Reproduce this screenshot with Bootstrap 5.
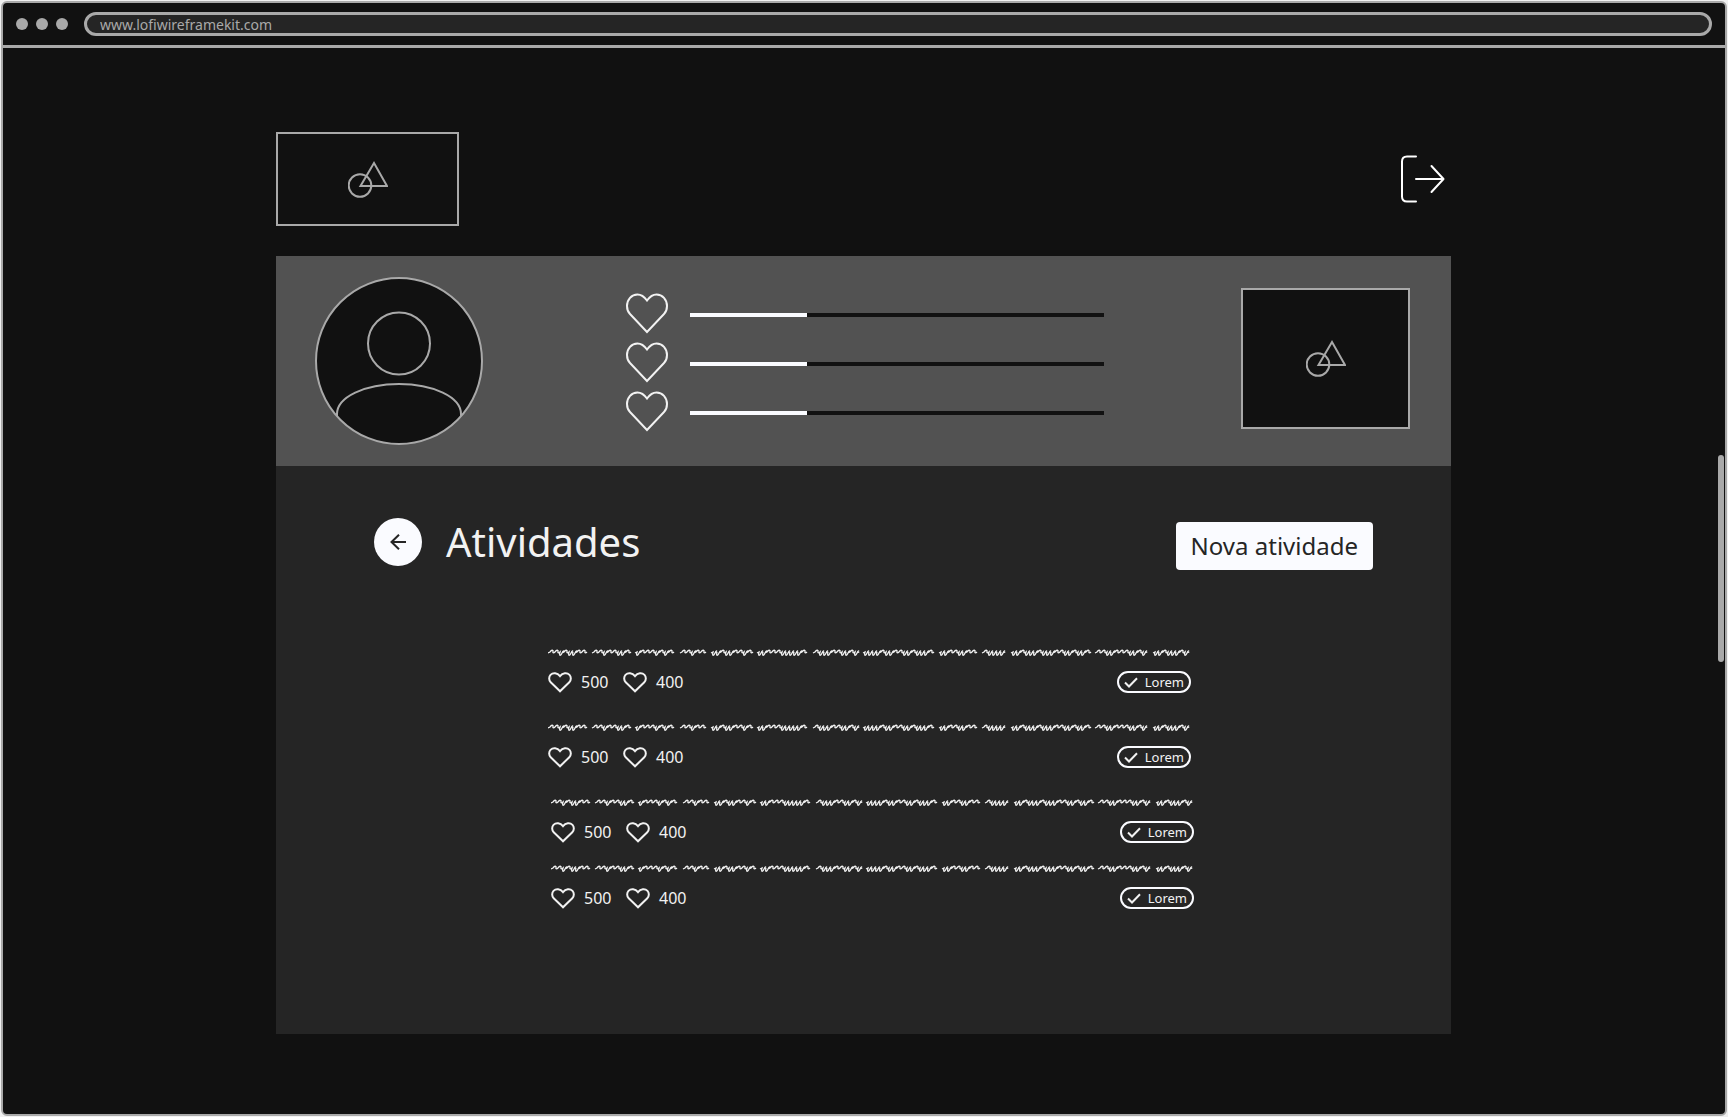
<!DOCTYPE html>
<html lang="pt">
<head>
<meta charset="utf-8">
<meta name="viewport" content="width=device-width, initial-scale=1">
<title>Atividades</title>
<link href="https://cdn.jsdelivr.net/npm/bootstrap@5.3.0/dist/css/bootstrap.min.css" rel="stylesheet">
<style>
  :root { --ink: #111; --panel: #252525; --band: #525252; --line: #a9a9a9; --paper: #fafbff; --text: #f2f2f2; }
  body { background: #f0f0f0; font-family: "Noto Sans", sans-serif; color: var(--text); padding: 1px; }
  svg { display: block; flex: none; fill: none; stroke: currentColor; stroke-width: 2; }
  .window { min-height: calc(100vh - 2px); background: var(--ink); border: 2px solid var(--line); border-radius: 6px; }
  .titlebar { height: 45px; padding: 0 13px; border-bottom: 3px solid var(--line); }
  .dot { width: 12px; height: 12px; background: var(--line); }
  .address { height: 24px; padding: 0 13px; border: 3px solid var(--line); background: var(--panel); color: var(--line); font-size: 14px; line-height: 18px; outline: 0; }
  .sheet { max-width: 1176px; padding: 84px 1px 79px 0; }
  .topline { padding-right: 6px; margin-bottom: 30px; }
  .picture { border: 2px solid var(--line); background: var(--ink); color: var(--line); }
  .logo-box { width: 183px; height: 94px; }
  .photo-box { width: 169px; height: 141px; }
  .band { background: var(--band); padding: 21px 41px 21px 39px; }
  .avatar { color: var(--line); margin-right: 143px; }
  .stats { padding-top: 16px; max-width: 478px; gap: 8px; }
  .stat { gap: 22px; }
  .meter { height: 4px; margin-top: 2px; background: var(--ink); border-radius: 0; }
  .meter .progress-bar { background: var(--paper); }
  .photo-col { padding-top: 11px; }
  .panel { background: var(--panel); min-height: 568px; padding: 52px 78px 0 98px; }
  .back { width: 48px; height: 48px; background: var(--paper); color: var(--panel); }
  .title { font-size: 40px; line-height: 48px; font-weight: 400; }
  .new-btn { height: 48px; padding: 0 15px; background: var(--paper); color: var(--panel); border: 0; border-radius: 4px; font-size: 24px; line-height: 48px; margin-top: 4px; }
  .tasks { max-width: 643px; margin: 79px 0 0 174px; gap: 31px; }
  .tasks-late { margin: 31px 0 0 177px; gap: 22px; }
  .task-line { height: 9px; max-width: 100%; stroke-width: 1.3; }
  .task-foot { padding-top: 13px; font-size: 16px; line-height: 22px; }
  .points { min-width: 75px; gap: 9px; }
  .tag { height: 22px; padding: 0 5px; gap: 7px; border: 2px solid var(--paper); background: none; color: var(--text); font-size: 13px; line-height: 18px; }
  .thumb { right: 1px; top: 452px; width: 6px; height: 207px; background: var(--line); }
</style>
</head>
<body>
<svg width="0" height="0" class="position-absolute" aria-hidden="true">
  <symbol id="shapes" viewBox="0 0 40 37"><circle cx="12" cy="24.5" r="11.3"/><path d="M26 2 12.500 25H39z"/></symbol>
  <symbol id="heart" viewBox="0 0 42 40"><path d="M21 38.500 4 20.500C1.500 18 1 15 1 12.500 1 6 5.500 1 11.500 1 15.500 1 18.500 3.500 21 7 23.500 3.500 26.500 1 30.500 1 36.500 1 41 6 41 12.500 41 15 40.500 18 38 20.500z"/></symbol>
  <symbol id="heart-sm" viewBox="0 0 24 21"><path d="M12 19.300 2.700 10.300C.7 8.300.7 4.800 2.500 2.900 5 .4 9.300.8 12 4.200 14.700.8 19 .4 21.500 2.900 23.300 4.800 23.300 8.300 21.300 10.300z"/></symbol>
  <symbol id="tick" viewBox="0 0 14 11"><path d="M1 5.500 5 9.500 13 1.200"/></symbol>
  <symbol id="scribble" viewBox="0 0 643 9"><path id="scribble-path"/></symbol>
</svg>

<div class="window position-relative d-flex flex-column">
  <header class="titlebar d-flex align-items-center">
    <span class="d-flex gap-2 me-3"><span class="dot rounded-circle"></span><span class="dot rounded-circle"></span><span class="dot rounded-circle"></span></span>
    <input class="address rounded-pill flex-grow-1" type="text" aria-label="Endereço" value="www.lofiwireframekit.com">
  </header>

  <main class="sheet container-fluid">
    <div class="topline d-flex justify-content-between align-items-center">
      <a href="#" class="picture logo-box d-flex align-items-center justify-content-center" aria-label="Início"><svg width="40" height="37"><use href="#shapes"/></svg></a>
      <a href="#" class="text-white" aria-label="Sair">
        <svg width="44" height="48" viewBox="0 0 44 48" stroke-linecap="round" stroke-linejoin="round"><path d="M15 1.500H6Q1 1.500 1 6.500V41.500Q1 46.500 6 46.500H15M15 24H42M30.500 11 42.500 24 30.500 37"/></svg>
      </a>
    </div>

    <section class="band d-flex align-items-start">
      <svg class="avatar" width="168" height="168" viewBox="0 0 168 168">
        <clipPath id="face"><circle cx="84" cy="84" r="83"/></clipPath>
        <circle cx="84" cy="84" r="83" fill="#111"/>
        <circle cx="84" cy="66.500" r="31"/>
        <path clip-path="url(#face)" d="M22 142V137C22 120 50 107 84 107S146 120 146 137V142"/>
      </svg>
      <div class="stats flex-grow-1 d-flex flex-column">
        <div class="stat d-flex align-items-center"><svg width="42" height="41"><use href="#heart"/></svg><div class="meter progress flex-grow-1" role="progressbar" aria-label="Nível 1" aria-valuenow="28" aria-valuemin="0" aria-valuemax="100"><div class="progress-bar" style="width:28.2%"></div></div></div>
        <div class="stat d-flex align-items-center"><svg width="42" height="41"><use href="#heart"/></svg><div class="meter progress flex-grow-1" role="progressbar" aria-label="Nível 2" aria-valuenow="28" aria-valuemin="0" aria-valuemax="100"><div class="progress-bar" style="width:28.2%"></div></div></div>
        <div class="stat d-flex align-items-center"><svg width="42" height="41"><use href="#heart"/></svg><div class="meter progress flex-grow-1" role="progressbar" aria-label="Nível 3" aria-valuenow="28" aria-valuemin="0" aria-valuemax="100"><div class="progress-bar" style="width:28.2%"></div></div></div>
      </div>
      <div class="photo-col ms-auto"><div class="picture photo-box d-flex align-items-center justify-content-center"><svg width="40" height="37"><use href="#shapes"/></svg></div></div>
    </section>

    <section class="panel">
      <div class="d-flex align-items-start">
        <button type="button" class="back btn rounded-circle p-0 me-4 d-flex align-items-center justify-content-center" aria-label="Voltar"><svg width="16" height="16" viewBox="0 0 16 16"><path d="M16 8H1.500M9 .7 1.500 8 9 15.300"/></svg></button>
        <h1 class="title mb-0">Atividades</h1>
        <button type="button" class="new-btn btn ms-auto">Nova atividade</button>
      </div>

      <ul class="tasks list-unstyled d-flex flex-column mb-0">
        <li>
          <svg class="task-line" width="643" aria-hidden="true"><use href="#scribble"/></svg>
          <div class="task-foot d-flex align-items-center">
            <span class="points d-flex align-items-center"><svg width="24" height="21"><use href="#heart-sm"/></svg>500</span>
            <span class="points d-flex align-items-center"><svg width="24" height="21"><use href="#heart-sm"/></svg>400</span>
            <button type="button" class="tag rounded-pill ms-auto d-flex align-items-center"><svg width="14" height="11"><use href="#tick"/></svg>Lorem</button>
          </div>
        </li>
        <li>
          <svg class="task-line" width="643" aria-hidden="true"><use href="#scribble"/></svg>
          <div class="task-foot d-flex align-items-center">
            <span class="points d-flex align-items-center"><svg width="24" height="21"><use href="#heart-sm"/></svg>500</span>
            <span class="points d-flex align-items-center"><svg width="24" height="21"><use href="#heart-sm"/></svg>400</span>
            <button type="button" class="tag rounded-pill ms-auto d-flex align-items-center"><svg width="14" height="11"><use href="#tick"/></svg>Lorem</button>
          </div>
        </li>
      </ul>
      <ul class="tasks tasks-late list-unstyled d-flex flex-column mb-0">
        <li>
          <svg class="task-line" width="643" aria-hidden="true"><use href="#scribble"/></svg>
          <div class="task-foot d-flex align-items-center">
            <span class="points d-flex align-items-center"><svg width="24" height="21"><use href="#heart-sm"/></svg>500</span>
            <span class="points d-flex align-items-center"><svg width="24" height="21"><use href="#heart-sm"/></svg>400</span>
            <button type="button" class="tag rounded-pill ms-auto d-flex align-items-center"><svg width="14" height="11"><use href="#tick"/></svg>Lorem</button>
          </div>
        </li>
        <li>
          <svg class="task-line" width="643" aria-hidden="true"><use href="#scribble"/></svg>
          <div class="task-foot d-flex align-items-center">
            <span class="points d-flex align-items-center"><svg width="24" height="21"><use href="#heart-sm"/></svg>500</span>
            <span class="points d-flex align-items-center"><svg width="24" height="21"><use href="#heart-sm"/></svg>400</span>
            <button type="button" class="tag rounded-pill ms-auto d-flex align-items-center"><svg width="14" height="11"><use href="#tick"/></svg>Lorem</button>
          </div>
        </li>
      </ul>
    </section>
  </main>
  <span class="thumb position-absolute rounded-pill"></span>
</div>

<script src="https://cdn.jsdelivr.net/npm/bootstrap@5.3.0/dist/js/bootstrap.bundle.min.js"></script>
<script>
  // Placeholder handwriting: each word is a start x and a run of strokes (n = wide arch, u = narrow hook).
  const stroke = { n: "c1-2 3.500-2.500 3-.5s1 1.500 2 .5", u: "c-1 4 .5 4 1.500 2s1.500-3 2-3q0 2 .5 1" };
  const words = [[0, "nnunuunn"], [44, "nnunnuun"], [87, "unnnunun"], [132, "nnunn"], [163, "uunuunnun"], [209, "uunnnuuuuun"],
    [265, "nuuunnuunu"], [315, "uuuunuunnuunuuun"], [391, "uunnuunn"], [434, "nuuuu"], [463, "uunuuunuuunnuunuun"], [547, "nnuunnnuunu"], [605, "uunuuunu"]];
  document.getElementById("scribble-path").setAttribute("d",
    words.map(([x, run]) => "M" + x + " 4l2-1" + [...run].map(c => stroke[c]).join("")).join(""));
</script>
</body>
</html>
